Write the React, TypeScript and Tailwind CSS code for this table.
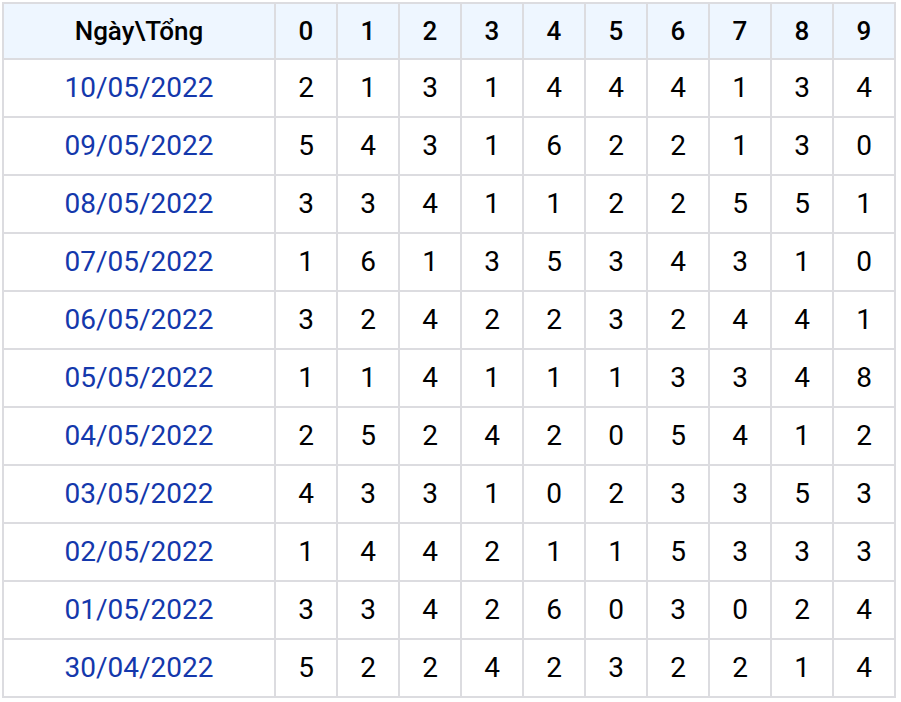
const rows: [string, number[]][] = [
  ['10/05/2022', [2, 1, 3, 1, 4, 4, 4, 1, 3, 4]],
  ['09/05/2022', [5, 4, 3, 1, 6, 2, 2, 1, 3, 0]],
  ['08/05/2022', [3, 3, 4, 1, 1, 2, 2, 5, 5, 1]],
  ['07/05/2022', [1, 6, 1, 3, 5, 3, 4, 3, 1, 0]],
  ['06/05/2022', [3, 2, 4, 2, 2, 3, 2, 4, 4, 1]],
  ['05/05/2022', [1, 1, 4, 1, 1, 1, 3, 3, 4, 8]],
  ['04/05/2022', [2, 5, 2, 4, 2, 0, 5, 4, 1, 2]],
  ['03/05/2022', [4, 3, 3, 1, 0, 2, 3, 3, 5, 3]],
  ['02/05/2022', [1, 4, 4, 2, 1, 1, 5, 3, 3, 3]],
  ['01/05/2022', [3, 3, 4, 2, 6, 0, 3, 0, 2, 4]],
  ['30/04/2022', [5, 2, 2, 4, 2, 3, 2, 2, 1, 4]],
]

export default function App() {
  return (
    <div className="bg-white pl-[2px] pt-[2px]" style={{ fontFamily: 'Roboto, sans-serif' }}>
      <table className="w-[894px] border-collapse table-fixed text-center">
        <colgroup>
          <col className="w-[272px]" />
          {Array.from({ length: 10 }).map((_, i) => (
            <col key={i} className="w-[62px]" />
          ))}
        </colgroup>
        <thead>
          <tr className="h-[56px] bg-[#eef6ff]">
            <th className="border-2 border-[#dcdce0] text-[26px] font-medium text-black">Ngày\Tổng</th>
            {Array.from({ length: 10 }).map((_, i) => (
              <th key={i} className="border-2 border-[#dcdce0] text-[26px] font-medium text-black">
                {i}
              </th>
            ))}
          </tr>
        </thead>
        <tbody>
          {rows.map(([date, vals]) => (
            <tr key={date} className="h-[58px]">
              <td className="border-2 border-[#dcdce0] text-[28px] text-[#1438ac]">{date}</td>
              {vals.map((v, i) => (
                <td key={i} className="border-2 border-[#dcdce0] text-[28px] text-black">
                  {v}
                </td>
              ))}
            </tr>
          ))}
        </tbody>
      </table>
    </div>
  )
}
